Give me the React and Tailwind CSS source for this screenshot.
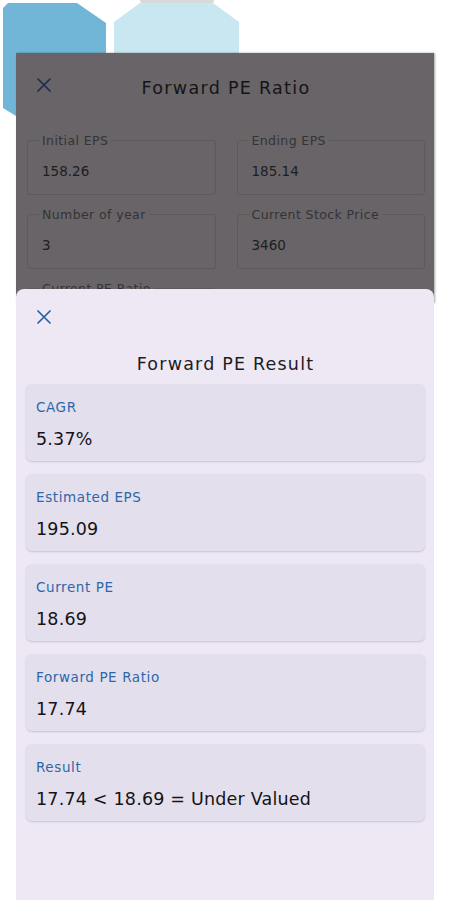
import React from "react";

function XIcon({ color }) {
  return (
    <svg width="14" height="14" viewBox="0 0 14 14" fill="none">
      <path d="M1 1L13 13M13 1L1 13" stroke={color} strokeWidth="1.7" strokeLinecap="round" />
    </svg>
  );
}

function Field({ label, value }) {
  return (
    <div className="relative h-[55px] rounded-[3px] border border-[#5d595d]">
      <span className="absolute left-[11px] top-[-8px] bg-[#686468] px-[3px] text-[12.5px] leading-[16px] tracking-[0.4px] text-[#353335]">
        {label}
      </span>
      <div className="pl-[14px] pt-[21px] text-[13.5px] leading-[18px] text-[#1f1d1f]">{value}</div>
    </div>
  );
}

function Card({ label, value }) {
  return (
    <div className="h-[77px] rounded-[6px] bg-[#e4dfed] px-[10px] pt-[14px] shadow-[0_1px_2px_rgba(0,0,0,0.16)]">
      <div className="text-[13.5px] leading-[18px] tracking-[0.6px] text-[#2d67a9]">{label}</div>
      <div className="mt-[11px] text-[17.5px] leading-[24px] tracking-[0.2px] text-[#151316]">{value}</div>
    </div>
  );
}

export default function App() {
  return (
    <div className="relative h-[900px] w-[450px] overflow-hidden bg-white font-['DejaVu_Sans',sans-serif]">
      {/* background decorative hexagons */}
      <svg className="absolute left-0 top-0" width="250" height="130" viewBox="0 0 250 130">
        <rect x="140" y="-4" width="74" height="8" rx="4" fill="#d9d9d9" />
        <polygon points="8,3 77,3 106,23 106,130 16,130 16,116 3,108 3,8" fill="#72b6d7" />
        <polygon points="140,3 213,3 239,22 239,130 114,130 114,22" fill="#c9e7f0" />
      </svg>

      <div className="relative px-[16px] pt-[53px]">
        {/* dimmed dialog */}
        <div className="h-[250px] bg-[#686468] pl-[11px] pr-[9px] pt-[23px] shadow-[1px_0_2px_rgba(0,0,0,0.35)]">
          <div className="relative flex h-[24px] items-center justify-center">
            <div className="absolute left-[10px] top-[2px]">
              <XIcon color="#1d2d4c" />
            </div>
            <div className="text-[17.5px] leading-[24px] tracking-[1.3px] text-[#161416]">Forward PE Ratio</div>
          </div>
          <div className="mt-[40px] grid grid-cols-2 gap-x-[21px] gap-y-[19px]">
            <Field label="Initial EPS" value="158.26" />
            <Field label="Ending EPS" value="185.14" />
            <Field label="Number of year" value="3" />
            <Field label="Current Stock Price" value="3460" />
            <Field label="Current PE Ratio" value="" />
          </div>
        </div>
      </div>

      {/* bottom sheet */}
      <div className="absolute bottom-0 left-[16px] top-[289px] w-[418px] rounded-t-[8px] bg-[#eee8f4] pl-[10px] pr-[9px] pt-[21px]">
        <div className="pl-[11px]">
          <XIcon color="#2a5ea6" />
        </div>
        <div className="mt-[28px] text-center text-[17.5px] leading-[24px] tracking-[1.2px] text-[#1d1b1e]">
          Forward PE Result
        </div>
        <div className="mt-[8px] flex flex-col gap-[13px]">
          <Card label="CAGR" value="5.37%" />
          <Card label="Estimated EPS" value="195.09" />
          <Card label="Current PE" value="18.69" />
          <Card label="Forward PE Ratio" value="17.74" />
          <Card label="Result" value="17.74 < 18.69 = Under Valued" />
        </div>
      </div>
    </div>
  );
}
